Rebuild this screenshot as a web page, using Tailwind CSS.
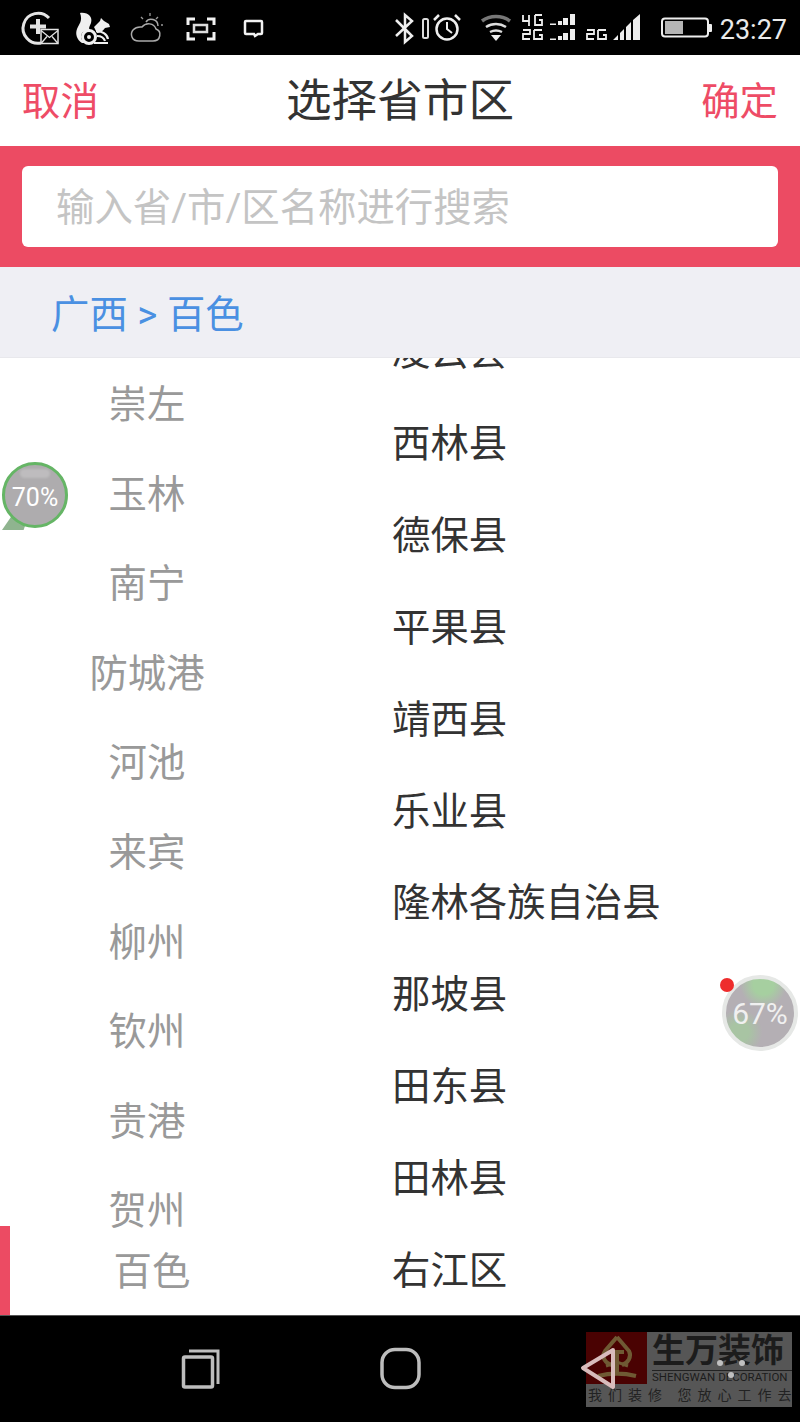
<!DOCTYPE html>
<html lang="zh-CN">
<head>
  <meta charset="UTF-8">
  <meta name="viewport" content="width=device-width, initial-scale=1.0">
  <title>选择省市区</title>
  <script src="https://cdn.jsdelivr.net/npm/@tailwindcss/browser@4"></script>
</head>
<body class="bg-white font-['Roboto','Noto_Sans_CJK_SC',sans-serif]">
<div class="relative w-[800px] h-[1422px] overflow-hidden flex flex-col">

  <!-- status bar -->
  <div class="h-[55px] shrink-0 bg-black flex items-center text-[#e6e6e6]">
    <svg width="800" height="55" viewBox="0 0 800 55" fill="none" stroke="#e4e4e4" stroke-width="2.5" class="absolute left-0 top-0">
      <!-- plus + mail -->
      <path d="M49 18A15 15 0 1 0 41 43" stroke-width="3"/>
      <path d="M38 19v15M30 26.500h16" stroke-width="4"/>
      <rect x="41" y="29.500" width="17" height="14" fill="#000" stroke-width="1.500"/>
      <path d="M41 30.500l8.500 7 8.500-7M41 43.500l6-7M58 43.500l-6-7" stroke-width="1.300"/>
      <!-- squirrel -->
      <path d="M80 13c8-1 13 4 11 10-1 3-3 5-1 7-5 0-9 2-9 7 0 3 2 5 5 6h-4c-5-3-7-9-5-14 2-5 6-8 3-16z" fill="#f0f0f0" stroke="none"/>
      <path d="M94 27l6-6 1-3 3 3 5 3 1 3-5 1c-2 3-5 5-8 5z" fill="#f0f0f0" stroke="none"/>
      <circle cx="89" cy="37" r="6.500" stroke="#f0f0f0" stroke-width="3"/><circle cx="89" cy="37" r="2" fill="#f0f0f0" stroke="none"/>
      <path d="M96 31c6 0 11 3 12 8M97 36c4 0 7 2 8 5M94 43h14" stroke="#f0f0f0" stroke-width="2.200"/>
      <!-- cloud sun -->
      <path d="M139 41h14c8 0 9-10 3-12-2-6-10-7-14-2-8-1-12 5-10 10 1 3 4 4 7 4z" stroke="#aaa" stroke-width="1.500"/>
      <path d="M146 22c3-5 12-3 12 4" stroke="#aaa" stroke-width="1.500"/>
      <path d="M150 13v3M141 17l2 2M158 17l-2 2M161 25h2" stroke="#999" stroke-width="1.300"/>
      <!-- screenshot frame -->
      <path d="M188 25v-6h7M207 19h7v6M188 32v7h7M207 39h7v-7" stroke="#f2f2f2" stroke-width="3"/>
      <rect x="194" y="25" width="13" height="7" stroke="#ddd" stroke-width="2.500"/>
      <!-- message -->
      <path d="M246 21h15a1 1 0 0 1 1 1v11a1 1 0 0 1-1 1h-3l-3 2-1-2h-8a1 1 0 0 1-1-1V22a1 1 0 0 1 1-1z" stroke="#f2f2f2" stroke-width="2.500"/>
      <!-- bluetooth -->
      <path d="M396 20l16 16-7 6V15l7 6-16 15" stroke="#eee" stroke-width="2.500"/>
      <!-- vibrate -->
      <rect x="423" y="19" width="5" height="19" rx="1.500" stroke="#ddd" stroke-width="2"/>
      <!-- alarm -->
      <circle cx="447" cy="29" r="10.500" stroke="#eee" stroke-width="2.500"/>
      <path d="M447 22v7l5 4" stroke="#eee" stroke-width="2"/>
      <path d="M434 20l5-5M455 15l5 5" stroke="#eee" stroke-width="2.500"/>
      <!-- wifi -->
      <path d="M482 21c8-6 20-6 28 0" stroke="#777" stroke-width="3.500"/>
      <path d="M486 27c6-4 14-4 20 0M490 32c4-2 8-2 12 0" stroke="#ddd" stroke-width="2.500"/>
      <path d="M491 35h10l-5 6z" fill="#eee" stroke="none"/>
      <!-- signal 4G/2G -->
      <path d="M523 15v6h6M529 15v11M535 15h7M535 15v10h7v-5h-3M523 30h7v4h-7v5h7M534 30h8M534 30v9h8v-4h-3" stroke="#eee" stroke-width="1.800"/>
      <path d="M550 23.500h6v1.500h-6zM558 21h4v4h-4zM563 18h5v7h-5z" fill="#eee" stroke="none"/>
      <rect x="570" y="14" width="5" height="11" fill="#eee" stroke="none"/>
      <path d="M550 38.500h6v1.500h-6zM558 36h4v4h-4zM563 33h5v7h-5z" fill="#eee" stroke="none"/>
      <rect x="570" y="29" width="5" height="11" fill="#eee" stroke="none"/>
      <path d="M587 30h7v4h-7v5h7M598 30h8M598 30v9h8v-4h-3" stroke="#eee" stroke-width="1.800"/>
      <path d="M613 40l5-5v5zM620 33l4-4v11h-4zM626 27l5-5v18h-5zM633 20l7-6v26h-7z" fill="#eee" stroke="none"/>
      <!-- battery -->
      <rect x="662" y="18.500" width="46" height="18" rx="3" stroke="#eee" stroke-width="2"/>
      <rect x="665" y="21" width="18" height="13" fill="#b5b5b5" stroke="none"/>
      <path d="M709 24h2a1 1 0 0 1 1 1v6a1 1 0 0 1-1 1h-2z" fill="#eee" stroke="none"/>
    </svg>
    <span class="ml-auto mr-[13px] pt-[5px] text-[27px] leading-none relative text-[#eaeaea]">23:27</span>
  </div>

  <!-- title bar -->
  <div class="h-[91px] shrink-0 bg-white flex items-center justify-between px-[22px] pt-[3px] text-[38.400px] leading-none">
    <span class="text-[#ee4c66]">取消</span>
    <span class="text-[#333333] text-[45.600px] relative">选择省市区</span>
    <span class="text-[#ee4c66]">确定</span>
  </div>

  <!-- search -->
  <div class="h-[121px] shrink-0 bg-[#ec4b63] px-[22px] py-[20px]">
    <div class="h-[81px] bg-white rounded-[6px] flex items-center pl-[34px] pt-[2px] text-[38.400px] text-[#c4c4c4]">输入省/市/区名称进行搜索</div>
  </div>

  <!-- breadcrumb -->
  <div class="h-[91px] shrink-0 bg-[#efeff4] flex items-center pl-[51px] pt-[6px] text-[38.400px] text-[#4a90e2] border-b border-[#e8e8ec]">广西 &gt; 百色</div>

  <!-- lists -->
  <div class="relative flex-1 flex overflow-hidden bg-white">
    <div class="w-[294px] shrink-0 flex flex-col text-[38.400px] text-[#999999] text-center">
      <div class="h-[89.6px] shrink-0 flex items-center justify-center pt-[4px]">崇左</div>
      <div class="h-[89.6px] shrink-0 flex items-center justify-center pt-[4px]">玉林</div>
      <div class="h-[89.6px] shrink-0 flex items-center justify-center pt-[4px]">南宁</div>
      <div class="h-[89.6px] shrink-0 flex items-center justify-center pt-[4px]">防城港</div>
      <div class="h-[89.6px] shrink-0 flex items-center justify-center pt-[4px]">河池</div>
      <div class="h-[89.6px] shrink-0 flex items-center justify-center pt-[4px]">来宾</div>
      <div class="h-[89.6px] shrink-0 flex items-center justify-center pt-[4px]">柳州</div>
      <div class="h-[89.6px] shrink-0 flex items-center justify-center pt-[4px]">钦州</div>
      <div class="h-[89.6px] shrink-0 flex items-center justify-center pt-[4px]">贵港</div>
      <div class="h-[89.6px] shrink-0 flex items-center justify-center pt-[4px]">贺州</div>
    </div>
    <div class="flex-1 flex flex-col mt-[-53px] text-[38.400px] text-[#333333]">
      <div class="h-[91.9px] shrink-0 flex items-center pl-[98px] pt-[2px]">凌云县</div>
      <div class="h-[91.9px] shrink-0 flex items-center pl-[98px] pt-[2px]">西林县</div>
      <div class="h-[91.9px] shrink-0 flex items-center pl-[98px] pt-[2px]">德保县</div>
      <div class="h-[91.9px] shrink-0 flex items-center pl-[98px] pt-[2px]">平果县</div>
      <div class="h-[91.9px] shrink-0 flex items-center pl-[98px] pt-[2px]">靖西县</div>
      <div class="h-[91.9px] shrink-0 flex items-center pl-[98px] pt-[2px]">乐业县</div>
      <div class="h-[91.9px] shrink-0 flex items-center pl-[98px] pt-[2px]">隆林各族自治县</div>
      <div class="h-[91.9px] shrink-0 flex items-center pl-[98px] pt-[2px]">那坡县</div>
      <div class="h-[91.9px] shrink-0 flex items-center pl-[98px] pt-[2px]">田东县</div>
      <div class="h-[91.9px] shrink-0 flex items-center pl-[98px] pt-[2px]">田林县</div>
      <div class="h-[91.9px] shrink-0 flex items-center pl-[98px] pt-[2px]">右江区</div>
    </div>
    <!-- selected city pinned to the bottom -->
    <div class="absolute left-0 bottom-0 w-[294px] h-[89px] border-l-[10px] border-[#ec4b63] flex items-center justify-center pt-[2px] text-[38.400px] text-[#999999]">百色</div>
  </div>

  <!-- nav bar -->
  <div class="relative h-[107px] shrink-0 bg-black border-t border-[#555]">
    <!-- watermark -->
    <div class="absolute left-[586px] top-[16px] w-[206px] h-[75px] bg-[#565656]">
      <div class="flex h-[52px]">
        <div class="w-[61px] h-[52px] shrink-0 bg-[#4a0202] flex items-center justify-center">
          <svg width="50" height="50" viewBox="0 0 50 50" fill="none" stroke="#6f5a34" stroke-width="4">
            <path d="M25 4L13 18c-4 6 0 12 7 14M25 4l12 14c3 6-1 12-7 14M18 19h14M25 19v22M6 43c12-3 26-3 38 0"/>
            <path d="M14 33l11-4 11 4" stroke-width="3"/>
          </svg>
        </div>
        <div class="flex-1 min-w-0 pl-[5px] flex flex-col">
          <div class="h-[38px] text-[33px] leading-[33px] font-bold text-[#1c1c1c] whitespace-nowrap font-['Noto_Sans_CJK_SC',sans-serif]">生万装饰</div>
          <div class="border-t border-[#222] text-[11.500px] leading-[13px] text-[#1c1c1c] whitespace-nowrap">SHENGWAN DECORATION</div>
        </div>
      </div>
      <div class="pl-[2px] text-[14px] leading-[23px] text-[#222] tracking-[6px] whitespace-nowrap">我们装修 您放心工作去</div>
    </div>
    <!-- buttons -->
    <div class="absolute inset-0 flex">
      <svg width="800" height="107" viewBox="0 0 800 107" fill="none">
        <rect x="183.500" y="41" width="29" height="30" rx="1.500" stroke="#bdbdbd" stroke-width="3.500"/>
        <path d="M189 35h29v33" stroke="#bdbdbd" stroke-width="3"/>
        <rect x="382" y="33.500" width="37" height="38" rx="13" stroke="#bdbdbd" stroke-width="3.500"/>
        <path d="M613 34L583 52l30 19z" stroke="#d8bcbc" stroke-width="4" stroke-linejoin="round"/>
        <circle cx="720" cy="47" r="3" fill="#c0c0c0"/>
        <circle cx="742" cy="47" r="3" fill="#c0c0c0"/>
        <circle cx="731" cy="59" r="3" fill="#c0c0c0"/>
      </svg>
    </div>
  </div>

  <!-- floating widgets -->
  <div class="absolute left-[2px] top-[516px] w-[24px] h-[14px] bg-[#8fb48f] [clip-path:polygon(40%_0,100%_50%,90%_100%,0_100%)]"></div>
  <div class="absolute left-[2px] top-[462px] w-[66px] h-[66px] rounded-full bg-[#aeacae] border-[3px] border-[#65b565] flex items-center justify-center pt-[5px] text-[25px] text-white">
    <div class="absolute left-[15px] top-[4px] w-[30px] h-[9px] rounded-full bg-white/20 blur-[1px]"></div>
    70%
  </div>
  <div class="absolute left-[722px] top-[975px] w-[76px] h-[76px] rounded-full border-[4px] border-[#e6e8e6] bg-[radial-gradient(circle_at_55%_8%,#a6cfa0_0,#a6cfa0_14%,transparent_32%),radial-gradient(circle_at_20%_78%,#a8c4a3_0,#a8c4a3_12%,transparent_30%),linear-gradient(#b4afb4,#b4afb4)] flex items-center justify-center text-[30px] text-[#f0f0f0]">67%</div>
  <div class="absolute left-[720px] top-[978px] w-[14px] h-[14px] rounded-full bg-[#ee2c2c]"></div>
</div>
</body>
</html>
